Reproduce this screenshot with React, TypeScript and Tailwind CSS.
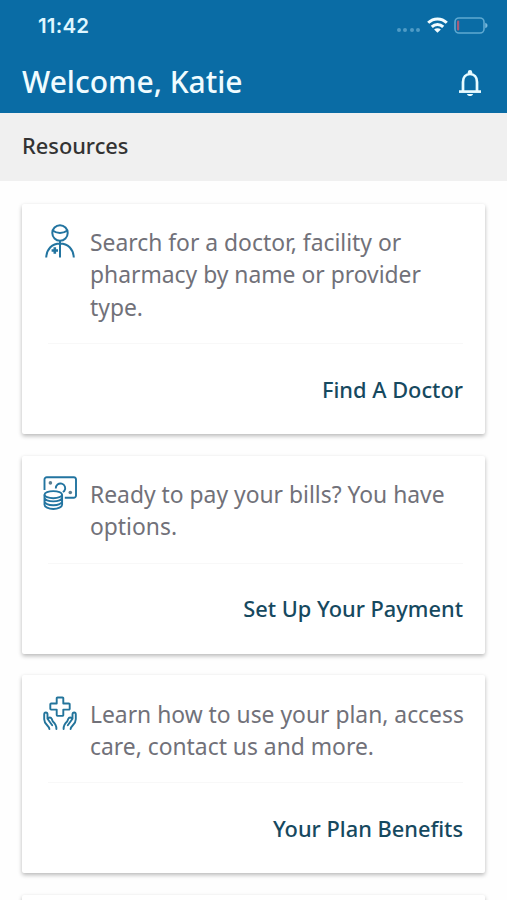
import React from 'react';

const resources = [
  {
    id: 'doctor',
    icon: <DoctorIcon />,
    lines: ['Search for a doctor, facility or', 'pharmacy by name or provider', 'type.'],
    action: 'Find A Doctor',
  },
  {
    id: 'payment',
    icon: <PaymentIcon />,
    lines: ['Ready to pay your bills? You have', 'options.'],
    action: 'Set Up Your Payment',
  },
  {
    id: 'benefits',
    icon: <BenefitsIcon />,
    lines: ['Learn how to use your plan, access', 'care, contact us and more.'],
    action: 'Your Plan Benefits',
  },
];

function DoctorIcon() {
  return (
    <svg className="h-9 w-9" viewBox="0 0 36 36" fill="none" stroke="#2274a0" strokeWidth="2">
      <circle cx="18" cy="10" r="7.7" />
      <path d="M10.700 7.500c4.300 3.300 10.300 3.300 14.600 0M4.200 34.500c.6-8.500 5.800-14 13.800-14s13.200 5.500 13.800 14M18 18v16.500" />
      <path d="M12.800 24.300v6.400M9.600 27.500h6.400" strokeWidth="2.600" />
    </svg>
  );
}

function PaymentIcon() {
  return (
    <svg className="h-9 w-9" viewBox="0 0 36 36" fill="none" stroke="#2274a0" strokeWidth="1.900">
      <path d="M2.500 15V4.500a2.300 2.300 0 0 1 2.300-2.300h27A2.300 2.300 0 0 1 34 4.500v16a2.300 2.300 0 0 1-2.300 2.300h-8.900" />
      <path d="M13.800 13.500a4.700 4.700 0 1 1 8.600 2.300l-1.400 1.300" />
      <circle cx="8.400" cy="7.900" r="1.800" fill="#5c7f91" stroke="none" />
      <circle cx="28.300" cy="17.500" r="1.800" fill="#5c7f91" stroke="none" />
      <ellipse cx="11.300" cy="19.700" rx="8.800" ry="3.600" />
      <path d="M2.500 19.700v10c0 2.200 3.900 4.300 8.800 4.300s8.800-2.100 8.800-4.300v-10M2.500 22.500c0 2.300 3.900 3.900 8.800 3.900s8.800-1.600 8.800-3.900M2.500 26.300c0 2.300 3.900 3.900 8.800 3.900s8.800-1.600 8.800-3.900" />
    </svg>
  );
}

function BenefitsIcon() {
  return (
    <svg className="h-9 w-9" viewBox="0 0 36 36" fill="none" stroke="#23749b" strokeWidth="1.900" strokeLinejoin="round" strokeLinecap="round">
      <path d="M15.500 2.500h5a.8.8 0 0 1 .8.8v5.200h5.600a.8.8 0 0 1 .8.800v4.500a.8.8 0 0 1-.8.800h-5.600v5.500a.8.8 0 0 1-.8.800h-5a.8.8 0 0 1-.8-.8v-5.500H9.100a.8.8 0 0 1-.8-.8V9.300a.8.8 0 0 1 .8-.8h5.600V3.300a.8.8 0 0 1 .8-.8z" />
      <path id="hand" d="M7.400 34c-.3-3.600-5.200-4.400-5.200-9.800v-4.700c0-2.600 3.300-2.600 3.300 0v4.300l4.700 6.400M6 24c.6-2.200 3.100-1.800 3.600-.3l1.300 2.900c2.400 2 3.500 4 3.500 7.400" />
      <use href="#hand" transform="matrix(-1 0 0 1 36 0)" />
    </svg>
  );
}

function StatusBar() {
  return (
    <div className="flex h-[50px] items-center justify-between pl-[38px] pr-[19px] text-[#dff6ff]">
      <span className="pt-px font-['Inter'] text-[20.500px] font-semibold leading-6 tracking-[0.200px]">11:42</span>
      <div className="flex items-center">
        <div className="mr-[7px] mt-[10px] flex gap-[2.500px]">
          {[0, 1, 2, 3].map((dot) => (
            <span key={dot} className="h-[4px] w-[4px] rounded-full bg-[#4e9bc6]" />
          ))}
        </div>
        <svg className="mr-[6px] h-[16px] w-[21px]" viewBox="0 0 21 16" fill="none" stroke="#f2fcff" strokeWidth="3">
          <path d="M1.200 5.800c5.300-5.200 13.300-5.200 18.600 0M4.800 9.900c3.300-3.200 8.100-3.200 11.400 0" />
          <path d="M10.500 15.800 7.100 12.600c1.900-1.700 4.900-1.700 6.800 0z" fill="#f2fcff" stroke="none" />
        </svg>
        <svg className="h-[17px] w-[34px]" viewBox="0 0 34 17" fill="none">
          <rect x="1" y="1" width="29" height="15" rx="4" stroke="#5fa9d1" strokeWidth="1.600" />
          <path d="M31.500 6.200c2.300.5 2.300 4.100 0 4.600z" fill="#7dbbdc" stroke="#7dbbdc" strokeWidth=".5" />
          <rect x="3" y="3.500" width="2.200" height="10" rx="1" fill="#a85b78" />
        </svg>
      </div>
    </div>
  );
}

function BellIcon() {
  return (
    <svg className="h-7 w-6" viewBox="0 0 24 28" fill="none" stroke="#e8fbff" strokeWidth="2.700">
      <path d="M5 22V13C5 8 8 5 12 5s7 3 7 8v9" />
      <path d="M1 22.600h22" />
      <path d="M9 25h6c-.5 2.800-5.500 2.800-6 0z" fill="#e8fbff" stroke="none" />
      <circle cx="12" cy="3.300" r="2.200" fill="#e8fbff" stroke="none" />
    </svg>
  );
}

export default function App() {
  return (
    <div className="h-[900px] w-full overflow-hidden bg-[#fefefe] font-['Noto_Sans',sans-serif]">
      <header className="h-[113px] bg-[#0a6ca5]">
        <StatusBar />
        <div className="flex h-[63px] items-center justify-between pl-[22px] pr-[25px]">
          <h1 className="text-[30px] font-medium leading-[62px] text-[#f0fcff]">Welcome, Katie</h1>
          <button aria-label="Notifications" className="mt-[2px]">
            <BellIcon />
          </button>
        </div>
      </header>

      <div className="h-[68px] bg-[#f0f0f0] px-[22px] pt-[18px]">
        <h2 className="text-[21.800px] font-medium leading-[30px] text-[#333]">Resources</h2>
      </div>

      <main className="flex flex-col gap-[21.500px] px-[22px] pt-[22.500px]">
        {resources.map(({ id, icon, lines, action }) => (
          <section key={id} className="rounded-[2px] bg-white px-[22px] shadow-[0_2px_4px_rgba(0,0,0,0.28)]">
            <div className="flex pb-[18.800px] pt-[23.500px]">
              <div className="-ml-[2px] -mt-[4px] h-9 w-[48px] shrink-0">{icon}</div>
              <p className="whitespace-nowrap text-[22.850px] leading-[32.400px] text-[#717179]">
                {lines.map((line) => (
                  <span key={line} className="block">{line}</span>
                ))}
              </p>
            </div>
            <div className="ml-1 flex h-[91px] items-center justify-end border-t border-[#f8f8f8] pt-px">
              <button className="text-[21.800px] font-medium leading-8 text-[#16495f]">{action}</button>
            </div>
          </section>
        ))}
        <section className="h-[198px] shrink-0 rounded-[2px] bg-white shadow-[0_2px_4px_rgba(0,0,0,0.28)]" />
      </main>
    </div>
  );
}
